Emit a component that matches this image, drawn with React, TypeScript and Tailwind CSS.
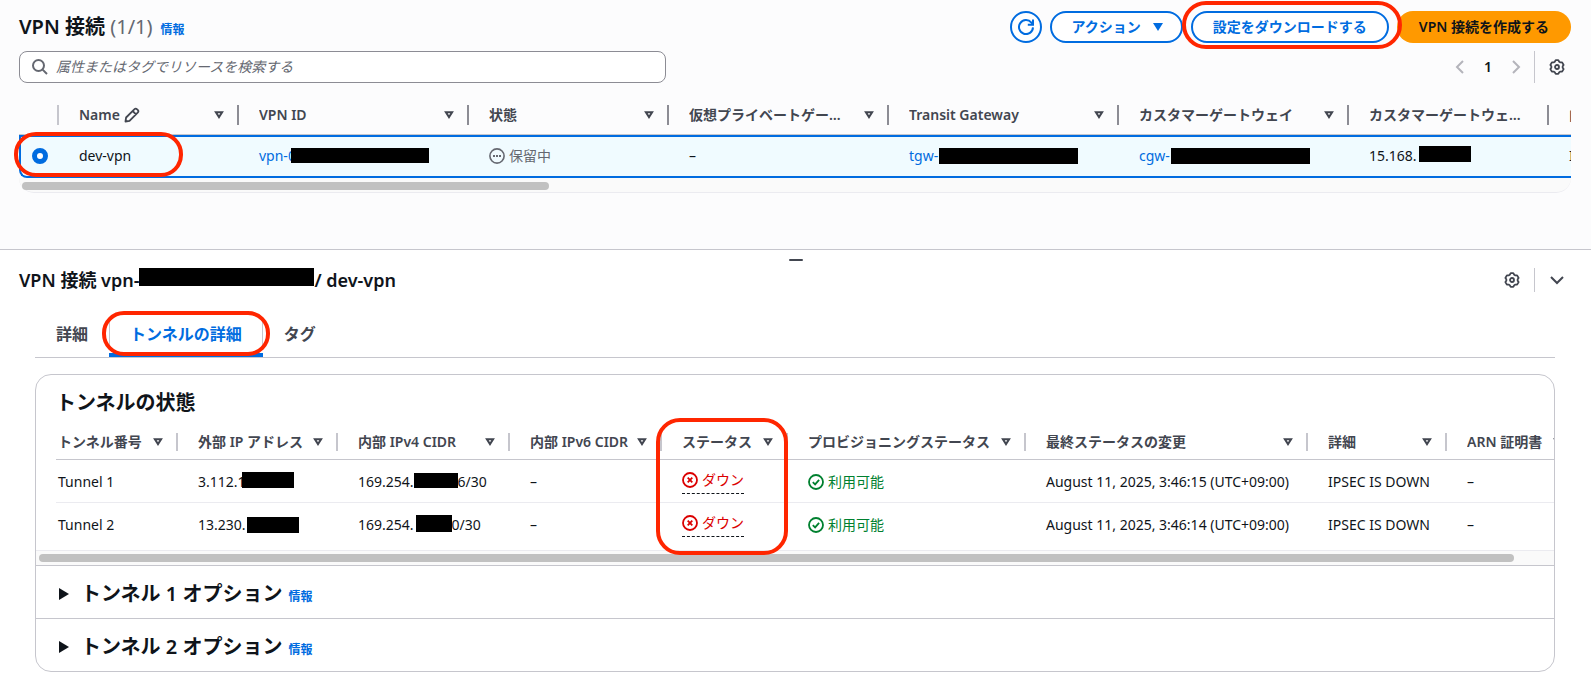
import { ReactNode } from 'react';

const FONT = "font-['Noto_Sans','Noto_Sans_CJK_JP',sans-serif]";

function SortIcon() {
  return (
    <svg className="h-2 w-2.5 shrink-0" viewBox="0 0 10 8" fill="none" stroke="currentColor" strokeWidth="2" aria-hidden="true">
      <path d="M1.9 1.2h6.2L5 6.1z" />
    </svg>
  );
}

function GearIcon() {
  return (
    <svg className="size-4" viewBox="0 0 16 16" fill="none" stroke="currentColor" strokeWidth="1.8" strokeLinejoin="round" aria-hidden="true">
      <path d="M6.7 1.1h2.6l.93 1.65 1.2.7 1.68-.08 1.5 2.67-.95 1.27v1.38l.95 1.27-1.5 2.67-1.68-.08-1.2.7-.93 1.65H6.7l-.93-1.65-1.2-.7-1.68.08-1.5-2.67.95-1.27V7.31l-.95-1.27 1.5-2.67 1.68.08 1.2-.7z" />
      <circle cx="8" cy="8" r="2" />
    </svg>
  );
}

function Chevron({ d, className = '' }: { d: string; className?: string }) {
  return (
    <svg className={`size-4 ${className}`} viewBox="0 0 16 16" fill="none" stroke="currentColor" strokeWidth="2" aria-hidden="true">
      <path d={d} />
    </svg>
  );
}

function Redacted({ className }: { className: string }) {
  return <span className={`inline-block shrink-0 bg-black ${className}`} />;
}

function HeadCell({
  children,
  sortable = true,
  start = 'pl-5',
  height = 'h-[39px]',
  bar = 'h-5 bg-[#8c8c94]',
}: {
  children?: ReactNode;
  sortable?: boolean;
  start?: string;
  height?: string;
  bar?: string;
}) {
  return (
    <th scope="col" className="border-b border-[#c6c6cd] p-0 text-left font-semibold text-[#424650]">
      <div className={`flex items-center ${start} ${height}`}>
        <span className="min-w-0 flex-1 truncate">{children}</span>
        {sortable && <SortIcon />}
        <span className={`ml-[13px] w-0.5 shrink-0 ${bar}`} />
      </div>
    </th>
  );
}

const SELECTED = 'h-[43px] border-y-2 border-[#006ce0] bg-[#f0fbff] pt-0 pr-0 pb-0.5 pl-5 whitespace-nowrap';

function ConnectionsTable() {
  return (
    <div className="relative mt-3">
      <div className="overflow-hidden">
        <table className="w-[1730px] table-fixed border-separate border-spacing-0">
          <colgroup>
            <col className="w-10" />
            <col className="w-[180px]" />
            <col className="w-[230px]" />
            <col className="w-[200px]" />
            <col className="w-[220px]" />
            <col className="w-[230px]" />
            <col className="w-[230px]" />
            <col className="w-[200px]" />
            <col className="w-[200px]" />
          </colgroup>
          <thead>
            <tr>
              <HeadCell sortable={false} start="pl-0" bar="h-5 bg-[#c6c6cd]" />
              <HeadCell>
                <span className="flex items-center gap-1">
                  Name
                  <svg className="size-4" viewBox="0 0 16 16" fill="none" stroke="currentColor" strokeWidth="1.8" strokeLinejoin="round" aria-hidden="true">
                    <path d="M1.5 14.5l.6-4 8.2-8.2a2 2 0 0 1 2.8 0l.6.6a2 2 0 0 1 0 2.8l-8.2 8.2zM8.6 4l3.4 3.4" />
                  </svg>
                </span>
              </HeadCell>
              <HeadCell>VPN ID</HeadCell>
              <HeadCell>状態</HeadCell>
              <HeadCell><span className="mr-2.5 block truncate">仮想プライベートゲートウェイ</span></HeadCell>
              <HeadCell>Transit Gateway</HeadCell>
              <HeadCell>カスタマーゲートウェイ</HeadCell>
              <HeadCell sortable={false}>カスタマーゲートウェイアドレス</HeadCell>
              <HeadCell>内部 IP バージョン</HeadCell>
            </tr>
          </thead>
          <tbody>
            <tr>
              <td className="h-[43px] rounded-bl-lg border-2 border-r-0 border-[#006ce0] bg-[#f0fbff] pt-0 pr-0 pb-0.5 pl-[11px]">
                <input
                  type="radio"
                  name="connection"
                  aria-label="dev-vpn"
                  defaultChecked
                  className="block size-4 appearance-none rounded-full border-[5px] border-[#006ce0] bg-white"
                />
              </td>
              <td className={SELECTED}>dev-vpn</td>
              <td className={SELECTED}>
                <div className="flex items-center">
                  <a href="#vpn" className="text-[#006ce0]">vpn-0</a>
                  <Redacted className="-ml-[5px] h-[15px] w-[138px]" />
                </div>
              </td>
              <td className={SELECTED}>
                <div className="flex items-center gap-1 text-[#656871]">
                  <svg className="size-4" viewBox="0 0 16 16" fill="none" stroke="currentColor" strokeWidth="1.6" aria-hidden="true">
                    <circle cx="8" cy="8" r="7.1" />
                    <path d="M4 8h2M7 8h2M10 8h2" strokeWidth="2" />
                  </svg>
                  保留中
                </div>
              </td>
              <td className={SELECTED}>–</td>
              <td className={SELECTED}>
                <div className="flex items-center">
                  <a href="#tgw" className="text-[#006ce0]">tgw-</a>
                  <Redacted className="ml-px h-4 w-[139px]" />
                </div>
              </td>
              <td className={SELECTED}>
                <div className="flex items-center">
                  <a href="#cgw" className="text-[#006ce0]">cgw-</a>
                  <Redacted className="ml-px h-4 w-[139px]" />
                </div>
              </td>
              <td className={SELECTED}>
                <div className="flex items-center">
                  15.168.
                  <Redacted className="mb-1 ml-0.5 h-4 w-[52px]" />
                </div>
              </td>
              <td className={SELECTED}>IPv4</td>
            </tr>
          </tbody>
        </table>
      </div>
      <div className="rounded-b-2xl border-b border-[#ebebf0] bg-[#fafafa] pt-1 pb-0.5 pl-[3px]">
        <div className="h-2 w-[34%] rounded-full bg-[#c1c1c1]" />
      </div>
      <div className="pointer-events-none absolute top-[37px] -left-[5px] h-[45px] w-[169px] rounded-[22px] border-4 border-[#ff2600]" />
    </div>
  );
}

const PILL = 'flex h-8 items-center rounded-full border-2 border-[#006ce0] font-semibold text-[#006ce0]';

function ConnectionsPanel() {
  return (
    <section className="h-[249px] bg-[#fcfcfd] pt-[11px] pr-5 pl-[19px]">
      <div className="flex items-center justify-between">
        <div className="flex items-baseline">
          <h1 className="text-xl leading-8 font-semibold">
            VPN 接続 <span className="font-normal text-[#656871]">(1/1)</span>
          </h1>
          <a href="#info" className="ml-2 text-xs font-semibold text-[#006ce0]">情報</a>
        </div>
        <div className="flex gap-2">
          <button type="button" aria-label="更新" className={`${PILL} w-8 justify-center bg-white`}>
            <svg className="size-4" viewBox="0 0 16 16" fill="none" stroke="currentColor" strokeWidth="2" aria-hidden="true">
              <path d="M15 8.4A7 7 0 1 1 13.4 3.6L15 5.6" />
              <path d="M15 .4v5.4H9.8" />
            </svg>
          </button>
          <button type="button" className={`${PILL} gap-3 bg-white pr-[18px] pl-5`}>
            アクション
            <svg className="h-2 w-2.5" viewBox="0 0 10 8" fill="currentColor" aria-hidden="true">
              <path d="M0 0h10L5 8z" />
            </svg>
          </button>
          <button type="button" className={`${PILL} bg-white px-5`}>設定をダウンロードする</button>
          <div className="relative">
            <button type="button" className="flex h-8 items-center rounded-full bg-[#ff9900] px-[22px] font-semibold">VPN 接続を作成する</button>
            <div className="pointer-events-none absolute -top-2.5 right-[169px] h-12 w-[220px] rounded-3xl border-4 border-[#ff2600]" />
          </div>
        </div>
      </div>
      <div className="mt-2 flex items-center justify-between">
        <label className="flex h-8 w-5/12 items-center gap-2 rounded-lg border border-[#8c8c94] bg-white px-3">
          <svg className="size-4 shrink-0 text-[#656871]" viewBox="0 0 16 16" fill="none" stroke="currentColor" strokeWidth="2" aria-hidden="true">
            <circle cx="6.5" cy="6.5" r="5.5" />
            <path d="M10.6 10.6L15 15" />
          </svg>
          <input
            type="search"
            aria-label="リソースを検索"
            placeholder="属性またはタグでリソースを検索する"
            className="w-full bg-transparent outline-none placeholder:text-[#656871] placeholder:italic"
          />
        </label>
        <div className="flex items-center">
          <button type="button" aria-label="前へ" className="text-[#b4b4bb]"><Chevron d="M11 2L5 8l6 6" /></button>
          <span className="w-10 text-center font-semibold">1</span>
          <button type="button" aria-label="次へ" className="text-[#b4b4bb]"><Chevron d="M5 2l6 6-6 6" /></button>
          <span className="mr-3.5 ml-2.5 h-8 w-px bg-[#c6c6cd]" />
          <button type="button" aria-label="設定" className="mr-1.5 text-[#424650]"><GearIcon /></button>
        </div>
      </div>
      <ConnectionsTable />
    </section>
  );
}

type Tunnel = { name: string; outside: ReactNode; inside: ReactNode; changed: string };

const TUNNELS: Tunnel[] = [
  {
    name: 'Tunnel 1',
    outside: <>3.112.1<Redacted className="mb-1 -ml-1 h-4 w-[52px]" /></>,
    inside: <>169.254.<Redacted className="mb-1 h-[15px] w-11" />6/30</>,
    changed: 'August 11, 2025, 3:46:15 (UTC+09:00)',
  },
  {
    name: 'Tunnel 2',
    outside: <>13.230.<Redacted className="ml-px h-4 w-[52px]" /></>,
    inside: <>169.254.<Redacted className="mb-1 ml-0.5 h-[17px] w-9" />0/30</>,
    changed: 'August 11, 2025, 3:46:14 (UTC+09:00)',
  },
];

function TunnelTable() {
  const head = { height: 'h-[34px]', bar: 'h-[18px] bg-[#c6c6cd]' };
  return (
    <div className="overflow-hidden pl-5">
      <table className="w-[1522px] table-fixed border-separate border-spacing-0">
        <colgroup>
          <col className="w-[122px]" />
          <col className="w-40" />
          <col className="w-[172px]" />
          <col className="w-[152px]" />
          <col className="w-[126px]" />
          <col className="w-[238px]" />
          <col className="w-[282px]" />
          <col className="w-[139px]" />
          <col className="w-[131px]" />
        </colgroup>
        <thead>
          <tr>
            <HeadCell {...head} start="pl-0.5">トンネル番号</HeadCell>
            <HeadCell {...head}>外部 IP アドレス</HeadCell>
            <HeadCell {...head}>内部 IPv4 CIDR</HeadCell>
            <HeadCell {...head}>内部 IPv6 CIDR</HeadCell>
            <HeadCell {...head}>ステータス</HeadCell>
            <HeadCell {...head}>プロビジョニングステータス</HeadCell>
            <HeadCell {...head}>最終ステータスの変更</HeadCell>
            <HeadCell {...head}>詳細</HeadCell>
            <HeadCell {...head}>ARN 証明書</HeadCell>
          </tr>
        </thead>
        <tbody className="[&_td]:h-[42px] [&_td]:pt-0.5 [&_td]:pr-0 [&_td]:pb-0 [&_td]:pl-5 [&_td]:whitespace-nowrap [&_td:first-child]:pl-0.5 [&_tr:first-child_td]:h-[43px] [&_tr:first-child_td]:border-b [&_tr:first-child_td]:border-[#ebebf0]">
          {TUNNELS.map((t) => (
            <tr key={t.name}>
              <td>{t.name}</td>
              <td><div className="flex items-center">{t.outside}</div></td>
              <td><div className="flex items-center">{t.inside}</div></td>
              <td>–</td>
              <td>
                <button type="button" className="mb-0.5 flex h-[25px] items-center gap-1 border-b border-dashed border-[#0f141a] pb-0.5 text-[#db0000]">
                  <svg className="size-4" viewBox="0 0 16 16" fill="none" stroke="currentColor" strokeWidth="1.8" aria-hidden="true">
                    <circle cx="8" cy="8" r="7" />
                    <path d="M5.7 5.7l4.6 4.6M10.3 5.7l-4.6 4.6" />
                  </svg>
                  ダウン
                </button>
              </td>
              <td>
                <div className="flex items-center gap-1 text-[#00802f]">
                  <svg className="size-4" viewBox="0 0 16 16" fill="none" stroke="currentColor" strokeWidth="1.8" aria-hidden="true">
                    <circle cx="8" cy="8" r="7" />
                    <path d="M4.8 8.2l2.3 2.2 4-4.6" />
                  </svg>
                  利用可能
                </div>
              </td>
              <td>{t.changed}</td>
              <td>IPSEC IS DOWN</td>
              <td>–</td>
            </tr>
          ))}
        </tbody>
      </table>
    </div>
  );
}

function TunnelOptions({ title }: { title: string }) {
  return (
    <div className="flex h-[53px] items-center border-t border-[#c6c6cd] px-[23px] pt-1">
      <button type="button" className="flex items-center gap-3 text-xl leading-6 font-semibold">
        <svg className="h-3 w-2.5" viewBox="0 0 10 12" fill="currentColor" aria-hidden="true">
          <path d="M0 0l10 6-10 6z" />
        </svg>
        {title}
      </button>
      <a href="#info" className="mt-1.5 ml-1.5 text-xs font-semibold text-[#006ce0]">情報</a>
    </div>
  );
}

function DetailPanel() {
  return (
    <section className="border-t border-[#c6c6cd] bg-white pb-[22px]">
      <div className="mx-auto mt-[9px] h-0.5 w-3.5 rounded-xs bg-[#424650]" />
      <div className="mt-[7px] flex h-6 items-center justify-between pr-5 pl-[19px]">
        <h2 className="flex items-center text-lg font-semibold">
          VPN 接続 vpn-
          <Redacted className="mb-1.5 h-[18px] w-[175px]" />
          / dev-vpn
        </h2>
        <div className="flex items-center text-[#424650]">
          <button type="button" aria-label="設定"><GearIcon /></button>
          <span className="mx-3.5 h-6 w-px bg-[#c6c6cd]" />
          <button type="button" aria-label="閉じる"><Chevron d="M2 5l6 6 6-6" className="mr-1.5" /></button>
        </div>
      </div>

      <div className="mr-9 ml-[35px]">
        <div role="tablist" className="flex h-[66px] items-end border-b border-[#c6c6cd] pl-px text-base font-semibold text-[#424650]">
          <button type="button" role="tab" className="mb-[11px] h-6 px-5">詳細</button>
          <div className="relative mx-px">
            <button type="button" role="tab" aria-selected="true" className="block border-b-4 border-[#006ce0] pb-[7px] text-[#006ce0]">
              <span className="block h-6 border-x border-[#c6c6cd] px-5">トンネルの詳細</span>
            </button>
            <div className="pointer-events-none absolute -top-[11px] -left-[7px] h-[45px] w-[168px] rounded-[22px] border-4 border-[#ff2600]" />
          </div>
          <button type="button" role="tab" className="mb-[11px] h-6 px-5">タグ</button>
        </div>

        <div className="relative mt-4 overflow-hidden rounded-2xl border border-[#c6c6cd]">
          <h3 className="px-5 pt-4 pb-2.5 text-xl leading-6 font-semibold">トンネルの状態</h3>
          <TunnelTable />
          <div className="mt-[5px] border-t border-[#ebebf0] bg-[#fafafa] pt-[3px] pr-10 pb-[3px] pl-[3px]">
            <div className="h-2 rounded-full bg-[#c1c1c1]" />
          </div>
          <TunnelOptions title="トンネル 1 オプション" />
          <TunnelOptions title="トンネル 2 オプション" />
          <div className="pointer-events-none absolute top-[43px] left-[620px] h-[137px] w-[132px] rounded-3xl border-4 border-[#ff2600]" />
        </div>
      </div>
    </section>
  );
}

export default function App() {
  return (
    <main className={`${FONT} min-h-screen overflow-hidden bg-white text-sm text-[#0f141a]`}>
      <ConnectionsPanel />
      <DetailPanel />
    </main>
  );
}
